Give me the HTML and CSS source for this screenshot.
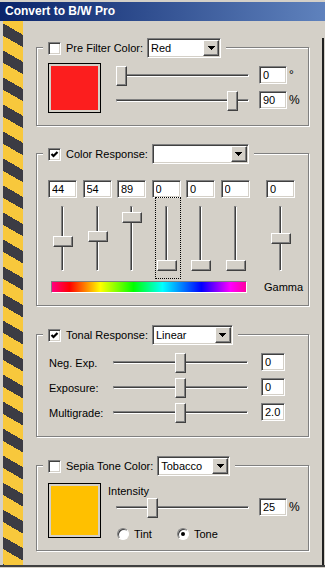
FILE: index.html
```html
<!DOCTYPE html>
<html lang="en">
<head>
    <meta charset="UTF-8">
    <meta name="viewport" content="width=device-width, initial-scale=1.0">
    <title>Convert to B/W Pro</title>
    <link rel="stylesheet" href="styles.css">
</head>
<body>
<div class="window">
    <div class="titlebar">Convert to B/W Pro</div>
    <div class="frame">
        <div class="stripe"></div>
        <div class="content">

            <!-- pre filter -->
            <div class="group group-filter">
                <div class="group-head">
                    <span class="check"></span>
                    <span class="head-label">Pre Filter Color:</span>
                    <div class="select" style="width: 74px">
                        <span class="select-text">Red</span>
                        <span class="select-btn"><svg width="7" height="4" viewBox="0 0 7 4"><path d="M0 0h7L3.5 4z"/></svg></span>
                    </div>
                </div>
                <div class="swatch-row">
                    <div class="swatch"><div class="swatch-fill red"></div></div>
                    <div class="controls">
                        <div class="slider-row">
                            <div class="hslider" style="--v: 0"><div class="htrack"></div><div class="hthumb"></div></div>
                            <input class="field w28" value="0">
                            <span class="unit">°</span>
                        </div>
                        <div class="slider-row">
                            <div class="hslider" style="--v: 0.91"><div class="htrack"></div><div class="hthumb"></div></div>
                            <input class="field w28" value="90">
                            <span class="unit">%</span>
                        </div>
                    </div>
                </div>
            </div>

            <!-- color response -->
            <div class="group group-color">
                <div class="group-head">
                    <span class="check on"><svg width="9" height="9" viewBox="0 0 9 9"><polyline points="1.5,4 3.5,6 7.5,2" fill="none" stroke="#000" stroke-width="2.2"/></svg></span>
                    <span class="head-label">Color Response:</span>
                    <div class="select" style="width: 97px">
                        <span class="select-text"></span>
                        <span class="select-btn"><svg width="7" height="4" viewBox="0 0 7 4"><path d="M0 0h7L3.5 4z"/></svg></span>
                    </div>
                </div>
                <div class="sliders">
                    <div class="col">
                        <input class="field" value="44">
                        <div class="vslider" style="--v: 0.44"><div class="vtrack"></div><div class="vthumb"></div></div>
                    </div>
                    <div class="col">
                        <input class="field" value="54">
                        <div class="vslider" style="--v: 0.54"><div class="vtrack"></div><div class="vthumb"></div></div>
                    </div>
                    <div class="col">
                        <input class="field" value="89">
                        <div class="vslider" style="--v: 0.89"><div class="vtrack"></div><div class="vthumb"></div></div>
                    </div>
                    <div class="col">
                        <input class="field" value="0">
                        <div class="vslider focus" style="--v: 0"><div class="vtrack"></div><div class="vthumb"></div></div>
                    </div>
                    <div class="col">
                        <input class="field" value="0">
                        <div class="vslider" style="--v: 0"><div class="vtrack"></div><div class="vthumb"></div></div>
                    </div>
                    <div class="col">
                        <input class="field" value="0">
                        <div class="vslider" style="--v: 0"><div class="vtrack"></div><div class="vthumb"></div></div>
                    </div>
                    <div class="col col-gamma">
                        <input class="field" value="0">
                        <div class="vslider" style="--v: 0.5"><div class="vtrack"></div><div class="vthumb"></div></div>
                    </div>
                </div>
                <div class="spectrum-row">
                    <div class="spectrum"></div>
                    <span class="gamma">Gamma</span>
                </div>
            </div>

            <!-- tonal response -->
            <div class="group group-tonal">
                <div class="group-head">
                    <span class="check on"><svg width="9" height="9" viewBox="0 0 9 9"><polyline points="1.5,4 3.5,6 7.5,2" fill="none" stroke="#000" stroke-width="2.2"/></svg></span>
                    <span class="head-label">Tonal Response:</span>
                    <div class="select" style="width: 81px">
                        <span class="select-text">Linear</span>
                        <span class="select-btn"><svg width="7" height="4" viewBox="0 0 7 4"><path d="M0 0h7L3.5 4z"/></svg></span>
                    </div>
                </div>
                <div class="tone-rows">
                    <div class="tone-row">
                        <span class="tone-label">Neg. Exp.</span>
                        <div class="hslider" style="--v: 0.5"><div class="htrack"></div><div class="hthumb"></div></div>
                        <input class="field" value="0">
                    </div>
                    <div class="tone-row">
                        <span class="tone-label">Exposure:</span>
                        <div class="hslider" style="--v: 0.5"><div class="htrack"></div><div class="hthumb"></div></div>
                        <input class="field" value="0">
                    </div>
                    <div class="tone-row">
                        <span class="tone-label">Multigrade:</span>
                        <div class="hslider" style="--v: 0.5"><div class="htrack"></div><div class="hthumb"></div></div>
                        <input class="field" value="2.0">
                    </div>
                </div>
            </div>

            <!-- sepia -->
            <div class="group group-sepia">
                <div class="group-head">
                    <span class="check"></span>
                    <span class="head-label">Sepia Tone Color:</span>
                    <div class="select" style="width: 73px">
                        <span class="select-text">Tobacco</span>
                        <span class="select-btn"><svg width="7" height="4" viewBox="0 0 7 4"><path d="M0 0h7L3.5 4z"/></svg></span>
                    </div>
                </div>
                <div class="swatch-row sepia-row">
                    <div class="swatch tall"><div class="swatch-fill sepia"></div></div>
                    <div class="sepia-controls">
                        <div class="caption">Intensity</div>
                        <div class="slider-row">
                            <div class="hslider" style="--v: 0.25"><div class="htrack"></div><div class="hthumb"></div></div>
                            <input class="field w28" value="25">
                            <span class="unit">%</span>
                        </div>
                        <div class="radios">
                            <label class="radio-item"><span class="radio"></span>Tint</label>
                            <label class="radio-item"><span class="radio on"></span>Tone</label>
                        </div>
                    </div>
                </div>
            </div>

        </div>
        <div class="edge"></div>
    </div>
    <div class="bottomline"></div>
</div>
</body>
</html>
```

FILE: styles.css
```css
body {
    margin: 0;
    background: #d4d0c8;
}
.window {
    width: 325px;
    height: 568px;
    display: flex;
    flex-direction: column;
    background: #d4d0c8;
    font-family: "Liberation Sans", Arial, sans-serif;
    font-size: 11px;
    color: #000;
    overflow: hidden;
}
.titlebar {
    margin-top: 2px;
    height: 19px;
    line-height: 19px;
    padding-left: 5px;
    background: linear-gradient(to right, #0a246a, #5f82bd);
    color: #fff;
    font-weight: bold;
    font-size: 12px;
}
.frame {
    flex: 1;
    display: flex;
}
.stripe {
    width: 20px;
    margin-left: 3px;
    background: repeating-linear-gradient(210deg, #f8c83c 0 12px, #3c3c44 12px 22.7px, #f8c83c 22.7px 23.4px);
}
.content {
    flex: 1;
}
.edge {
    width: 2px;
    margin: 17px 1px 0 0;
    background: #202020;
}
.bottomline {
    height: 2px;
    margin-bottom: 1px;
    background: #404040;
}

/* group boxes */
.group {
    box-sizing: border-box;
    width: 273px;
    margin-left: 13px;
    border: 1px solid #808080;
    box-shadow: inset 1px 1px 0 #fff, 1px 1px 0 #fff;
}
.group-filter { margin-top: 26px; height: 79px; }
.group-color { margin-top: 27px; height: 153px; }
.group-tonal { margin-top: 28px; height: 103px; }
.group-sepia { margin-top: 28px; height: 86px; }

.group-head {
    display: flex;
    align-items: center;
    width: fit-content;
    height: 20px;
    margin: -10px 0 0 6px;
    padding: 0 5px;
    background: #d4d0c8;
}
.head-label {
    margin: 0 4px 0 5px;
    white-space: nowrap;
}

/* 3d borders */
.check, .field, .select {
    border: 1px solid;
    border-color: #808080 #fff #fff #808080;
    box-shadow: inset 1px 1px 0 #404040, inset -1px -1px 0 #d4d0c8;
}
.hthumb, .vthumb, .select-btn {
    box-sizing: border-box;
    background: #d4d0c8;
    border: 1px solid;
    border-color: #fff #404040 #404040 #fff;
    box-shadow: inset -1px -1px 0 #808080;
}

.check {
    box-sizing: border-box;
    width: 13px;
    height: 13px;
    background: #fff;
    display: flex;
    align-items: center;
    justify-content: center;
}
.check svg {
    display: block;
}

.select {
    box-sizing: border-box;
    height: 20px;
    display: flex;
    background: #fff;
    padding: 1px;
}
.select-text {
    flex: 1;
    padding-left: 2px;
    line-height: 16px;
}
.select-btn {
    width: 16px;
    height: 16px;
    display: flex;
    align-items: center;
    justify-content: center;
}
.select-btn svg {
    display: block;
    shape-rendering: crispEdges;
}

.field {
    box-sizing: border-box;
    width: 29px;
    height: 18px;
    margin: 0;
    padding: 0 0 0 3px;
    font: 11px "Liberation Sans", Arial, sans-serif;
    color: #000;
    background: #fff;
    outline: none;
}
.w28 { width: 28px; }

/* sliders */
.hslider {
    position: relative;
    width: 133px;
    height: 20px;
    flex-shrink: 0;
}
.htrack {
    box-sizing: border-box;
    height: 3px;
    margin-top: 8px;
    background: #404040;
    border-top: 1px solid #808080;
    border-left: 1px solid #808080;
    border-bottom: 1px solid #fff;
    border-right: 1px solid #fff;
}
.hthumb {
    position: absolute;
    top: 0;
    left: calc(var(--v) * (100% - 11px));
    width: 11px;
    height: 20px;
}

.vslider {
    position: relative;
    box-sizing: border-box;
    width: 26px;
    height: 82px;
    margin: -1px 0 0 3px;
    border: 1px dotted transparent;
}
.vslider.focus {
    border-color: #000;
}
.vtrack {
    position: absolute;
    top: 8px;
    left: 9px;
    box-sizing: border-box;
    width: 3px;
    height: 65px;
    background: #404040;
    border-top: 1px solid #808080;
    border-left: 1px solid #808080;
    border-bottom: 1px solid #fff;
    border-right: 1px solid #fff;
}
.vthumb {
    position: absolute;
    left: 1px;
    top: calc(8px + (1 - var(--v)) * 54px);
    width: 20px;
    height: 11px;
}

/* pre filter + sepia */
.swatch-row {
    display: flex;
    margin-top: 5px;
    padding-left: 11px;
}
.sepia-row {
    margin-top: 7px;
}
.swatch {
    box-sizing: border-box;
    width: 53px;
    height: 50px;
    padding: 2px;
    border: 1px solid #000;
    background: #d4d0c8;
}
.swatch.tall {
    height: 55px;
}
.swatch-fill {
    height: 100%;
}
.red { background: #fc1e1e; }
.sepia { background: #ffc000; }

.controls {
    margin-left: 15px;
    padding-top: 3px;
    display: flex;
    flex-direction: column;
    gap: 5px;
}
.slider-row {
    display: flex;
    align-items: flex-start;
}
.slider-row .field {
    margin-left: 10px;
}
.unit {
    margin-left: 2px;
    line-height: 18px;
    font-size: 12px;
}

.sepia-controls {
    margin-left: 7px;
}
.caption {
    margin-top: 1px;
    line-height: 14px;
}
.sepia-controls .slider-row {
    margin-left: 8px;
}
.radios {
    display: flex;
    margin: 10px 0 0 9px;
}
.radio-item {
    display: flex;
    align-items: center;
    gap: 5px;
    height: 12px;
}
.radio-item:first-child {
    width: 60px;
}
.radio {
    box-sizing: border-box;
    width: 12px;
    height: 12px;
    border-radius: 50%;
    background: #fff;
    border: 1px solid;
    border-color: #808080 #fff #fff #808080;
    box-shadow: inset 1px 1px 0 #404040;
    display: flex;
    align-items: center;
    justify-content: center;
}
.radio.on::after {
    content: "";
    width: 4px;
    height: 4px;
    border-radius: 50%;
    background: #000;
}

/* color response */
.sliders {
    display: flex;
    gap: 5.5px;
    margin-top: 16px;
    padding-left: 11px;
}
.col {
    width: 29px;
    display: flex;
    flex-direction: column;
}
.col-gamma {
    margin-left: 11px;
}
.spectrum-row {
    display: flex;
    align-items: center;
    margin-top: 2px;
    padding-left: 14px;
}
.spectrum {
    box-sizing: border-box;
    width: 196px;
    height: 12px;
    border: 1px solid;
    border-color: #808080 #fff #fff #808080;
    background: linear-gradient(to right, #ff0080 0%, #ff0000 9%, #ffff00 25%, #00ff00 42%, #00ffff 57%, #0000ff 77%, #ff00ff 92%, #ff00a0 100%);
}
.gamma {
    margin-left: 17px;
}

/* tonal response */
.tone-rows {
    display: flex;
    flex-direction: column;
    gap: 5px;
    margin-top: 8px;
    padding-left: 12px;
}
.tone-row {
    display: flex;
    align-items: flex-start;
}
.tone-label {
    width: 64px;
    line-height: 20px;
}
.tone-row .hslider {
    width: 135px;
}
.tone-row .field {
    width: 24px;
    margin-left: 13px;
}
```
